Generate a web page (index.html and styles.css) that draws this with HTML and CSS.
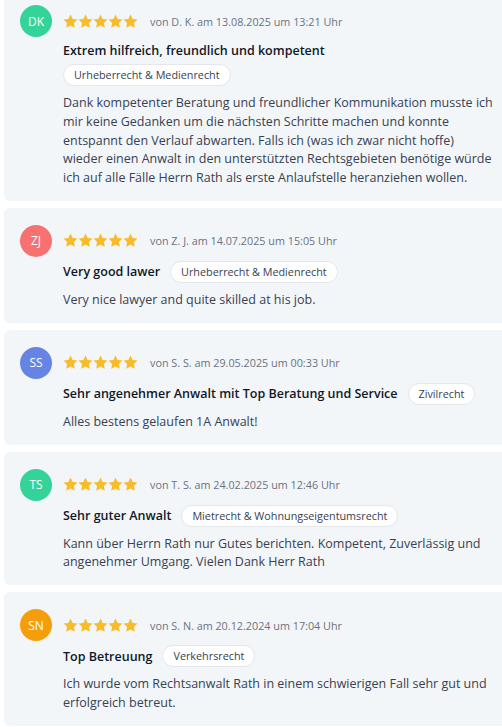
FILE: index.html
```html
<!DOCTYPE html>
<html lang="de">
<head>
  <meta charset="UTF-8" />
  <meta name="viewport" content="width=device-width, initial-scale=1.0"/>
  <title>Bewertungen</title>
  <link rel="stylesheet" href="styles.css">
</head>
<body>
  <svg width="0" height="0" class="sprite">
    <symbol id="star" viewBox="0 0 24 24">
      <path d="M12 .8l3.4 7 7.7 1.1-5.6 5.4 1.3 7.7L12 18.4 5.2 22l1.3-7.7L.9 8.9l7.7-1.1z"/>
    </symbol>
  </svg>

  <div class="reviews">

    <div class="review">
      <div class="avatar avatar-green">DK</div>
      <div class="review-body">
        <div class="review-head">
          <div class="stars">
            <svg><use href="#star"/></svg><svg><use href="#star"/></svg><svg><use href="#star"/></svg><svg><use href="#star"/></svg><svg><use href="#star"/></svg>
          </div>
          <span class="meta">von D. K. am 13.08.2025 um 13:21 Uhr</span>
        </div>
        <div class="review-title">
          <h3>Extrem hilfreich, freundlich und kompetent</h3>
          <span class="chip">Urheberrecht &amp; Medienrecht</span>
        </div>
        <p class="review-text">Dank kompetenter Beratung und freundlicher Kommunikation musste ich mir keine Gedanken um die nächsten Schritte machen und konnte entspannt den Verlauf abwarten. Falls ich (was ich zwar nicht hoffe) wieder einen Anwalt in den unterstützten Rechtsgebieten benötige würde ich auf alle Fälle Herrn Rath als erste Anlaufstelle heranziehen wollen.</p>
      </div>
    </div>

    <div class="review">
      <div class="avatar avatar-red">ZJ</div>
      <div class="review-body">
        <div class="review-head">
          <div class="stars">
            <svg><use href="#star"/></svg><svg><use href="#star"/></svg><svg><use href="#star"/></svg><svg><use href="#star"/></svg><svg><use href="#star"/></svg>
          </div>
          <span class="meta">von Z. J. am 14.07.2025 um 15:05 Uhr</span>
        </div>
        <div class="review-title">
          <h3>Very good lawer</h3>
          <span class="chip">Urheberrecht &amp; Medienrecht</span>
        </div>
        <p class="review-text">Very nice lawyer and quite skilled at his job.</p>
      </div>
    </div>

    <div class="review">
      <div class="avatar avatar-blue">SS</div>
      <div class="review-body">
        <div class="review-head">
          <div class="stars">
            <svg><use href="#star"/></svg><svg><use href="#star"/></svg><svg><use href="#star"/></svg><svg><use href="#star"/></svg><svg><use href="#star"/></svg>
          </div>
          <span class="meta">von S. S. am 29.05.2025 um 00:33 Uhr</span>
        </div>
        <div class="review-title">
          <h3>Sehr angenehmer Anwalt mit Top Beratung und Service</h3>
          <span class="chip">Zivilrecht</span>
        </div>
        <p class="review-text">Alles bestens gelaufen 1A Anwalt!</p>
      </div>
    </div>

    <div class="review">
      <div class="avatar avatar-green">TS</div>
      <div class="review-body">
        <div class="review-head">
          <div class="stars">
            <svg><use href="#star"/></svg><svg><use href="#star"/></svg><svg><use href="#star"/></svg><svg><use href="#star"/></svg><svg><use href="#star"/></svg>
          </div>
          <span class="meta">von T. S. am 24.02.2025 um 12:46 Uhr</span>
        </div>
        <div class="review-title">
          <h3>Sehr guter Anwalt</h3>
          <span class="chip">Mietrecht &amp; Wohnungseigentumsrecht</span>
        </div>
        <p class="review-text">Kann über Herrn Rath nur Gutes berichten. Kompetent, Zuverlässig und angenehmer Umgang. Vielen Dank Herr Rath</p>
      </div>
    </div>

    <div class="review">
      <div class="avatar avatar-orange">SN</div>
      <div class="review-body">
        <div class="review-head">
          <div class="stars">
            <svg><use href="#star"/></svg><svg><use href="#star"/></svg><svg><use href="#star"/></svg><svg><use href="#star"/></svg><svg><use href="#star"/></svg>
          </div>
          <span class="meta">von S. N. am 20.12.2024 um 17:04 Uhr</span>
        </div>
        <div class="review-title">
          <h3>Top Betreuung</h3>
          <span class="chip">Verkehrsrecht</span>
        </div>
        <p class="review-text">Ich wurde vom Rechtsanwalt Rath in einem schwierigen Fall sehr gut und erfolgreich betreut.</p>
      </div>
    </div>

  </div>
</body>
</html>
```

FILE: styles.css
```css
body, html {
  margin: 0;
  padding: 0;
  background: #fff;
  font-family: "Open Sans", "Noto Sans", sans-serif;
  color: #374151;
  overflow: hidden;
}

.sprite {
  position: absolute;
}

/* page is scrolled a little, first card starts above the top edge */
.reviews {
  display: flex;
  flex-direction: column;
  gap: 7px;
  margin: -12px -8px 0 4px;
}

.review {
  display: flex;
  gap: 11px;
  align-items: flex-start;
  background: #f3f6f9;
  border-radius: 6px;
  padding: 17px 16px 13px 16px;
}

.avatar {
  flex: 0 0 32px;
  width: 32px;
  height: 32px;
  border-radius: 50%;
  color: #fff;
  font-size: 12px;
  display: flex;
  align-items: center;
  justify-content: center;
}

.avatar-green { background: #34d399; }
.avatar-red { background: #f87171; }
.avatar-blue { background: #6684e3; }
.avatar-orange { background: #f59e0b; }

.review-body {
  flex: 1;
  min-width: 0;
}

.review-head {
  display: flex;
  align-items: center;
  gap: 12px;
  height: 32px;
}

.stars {
  display: flex;
}

.stars svg {
  width: 15px;
  height: 15px;
  fill: #f8bb2a;
}

.meta {
  font-size: 10.8px;
  color: #6b7280;
}

.review-title {
  display: flex;
  flex-wrap: wrap;
  align-items: center;
  gap: 4px 10px;
  margin-top: 4px;
}

.review-title h3 {
  margin: 0;
  font-size: 12.5px;
  font-weight: 600;
  color: #111827;
  line-height: 19px;
}

.chip {
  background: #fff;
  border: 1px solid #e5e7eb;
  border-radius: 11px;
  padding: 0 10px;
  font-size: 10.8px;
  line-height: 20px;
  color: #374151;
}

.review-text {
  margin: 8px 0 0;
  font-size: 12.5px;
  line-height: 18.8px;
}
```
